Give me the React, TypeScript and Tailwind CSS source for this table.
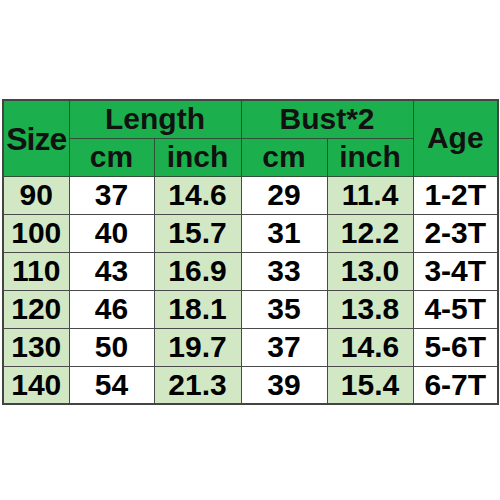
const rows = [
  { size: "90", lcm: "37", lin: "14.6", bcm: "29", bin: "11.4", age: "1-2T" },
  { size: "100", lcm: "40", lin: "15.7", bcm: "31", bin: "12.2", age: "2-3T" },
  { size: "110", lcm: "43", lin: "16.9", bcm: "33", bin: "13.0", age: "3-4T" },
  { size: "120", lcm: "46", lin: "18.1", bcm: "35", bin: "13.8", age: "4-5T" },
  { size: "130", lcm: "50", lin: "19.7", bcm: "37", bin: "14.6", age: "5-6T" },
  { size: "140", lcm: "54", lin: "21.3", bcm: "39", bin: "15.4", age: "6-7T" },
];

const head = "border border-[#2f4f37] bg-[#1bb04d] text-[#111] text-[30px] leading-none text-center p-0";
const cell = "border border-[#4a4a4a] text-[30px] leading-none text-center p-0";

export default function App() {
  return (
    <main
      className="h-[500px] w-[500px] bg-white pl-[2px] pt-[99px] font-bold text-black"
      style={{ fontFamily: '"Liberation Sans", Arial, sans-serif' }}
    >
      <table className="w-[495px] table-fixed border-collapse border-2 border-[#444]">
        <colgroup>
          <col className="w-[66px]" />
          <col className="w-[85px]" />
          <col className="w-[87px]" />
          <col className="w-[86px]" />
          <col className="w-[86px]" />
          <col className="w-[85px]" />
        </colgroup>
        <thead>
          <tr className="h-[38px]">
            <th rowSpan={2} className={head + " text-[32px] tracking-[-1px] pt-[2px]"}>
              Size
            </th>
            <th colSpan={2} className={head}>
              Length
            </th>
            <th colSpan={2} className={head}>
              Bust*2
            </th>
            <th rowSpan={2} className={head}>
              Age
            </th>
          </tr>
          <tr className="h-[38px]">
            <th className={head}>cm</th>
            <th className={head}>inch</th>
            <th className={head}>cm</th>
            <th className={head}>inch</th>
          </tr>
        </thead>
        <tbody>
          {rows.map((r) => (
            <tr key={r.size} className="h-[38px]">
              <td className={cell + " bg-[#d2e8c5]"}>{r.size}</td>
              <td className={cell + " bg-white"}>{r.lcm}</td>
              <td className={cell + " bg-[#d2e8c5]"}>{r.lin}</td>
              <td className={cell + " bg-white"}>{r.bcm}</td>
              <td className={cell + " bg-[#d2e8c5]"}>{r.bin}</td>
              <td className={cell + " bg-white text-[25px]"}>{r.age}</td>
            </tr>
          ))}
        </tbody>
      </table>
    </main>
  );
}
